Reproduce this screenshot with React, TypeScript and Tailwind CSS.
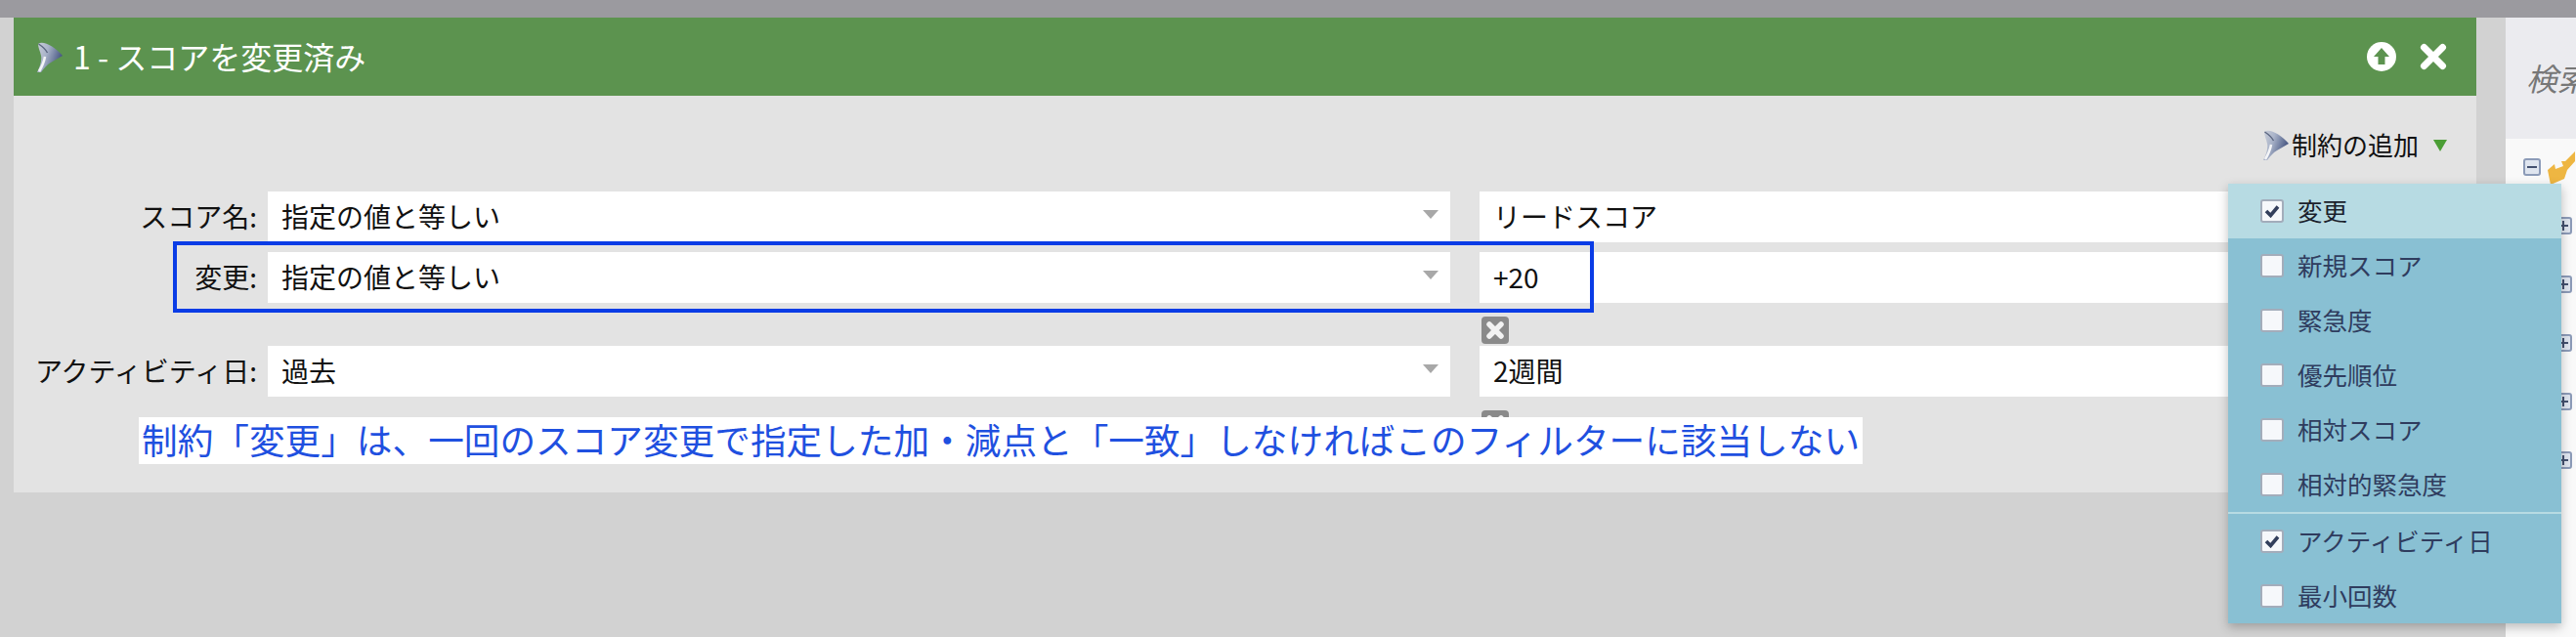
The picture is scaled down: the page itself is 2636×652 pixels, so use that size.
const JP = "font-['Noto_Sans_CJK_JP','Noto_Sans',sans-serif]";

const MENU_TOP = [
  { label: "変更", checked: true, active: true },
  { label: "新規スコア", checked: false },
  { label: "緊急度", checked: false },
  { label: "優先順位", checked: false },
  { label: "相対スコア", checked: false },
  { label: "相対的緊急度", checked: false },
];

const MENU_BOTTOM = [
  { label: "アクティビティ日", checked: true },
  { label: "最小回数", checked: false },
];

function Funnel({ id }: { id: string }) {
  return (
    <svg width="29" height="33" viewBox="0 0 29 33" className="shrink-0">
      <defs>
        <linearGradient id={id} x1="0" y1="0.1" x2="1" y2="0.5">
          <stop offset="0" stopColor="#c9ced8" />
          <stop offset="0.4" stopColor="#a9b3c9" />
          <stop offset="1" stopColor="#3f4f7c" />
        </linearGradient>
      </defs>
      <path
        d="M3 3C8-1 20 6 28 15L16 22C12 24 10 27 6 32L2 32C5 26 7 20 6 15C5 10 3 7 3 3Z"
        fill={`url(#${id})`}
      />
      <path d="M3.500 3c3 2 7 5 9 9" fill="none" stroke="#5b6680" strokeWidth="1.500" />
      <path d="M10 16c-1 6-3 10-6 15" fill="none" stroke="#f4f5f7" strokeWidth="2.500" />
    </svg>
  );
}

function RemoveIcon() {
  return (
    <div className="flex size-[28px] items-center justify-center rounded-[4px] bg-[#8a8a8a]">
      <svg width="20" height="20" viewBox="0 0 20 20">
        <path d="M4 4l12 12M16 4L4 16" stroke="#f2f2f2" strokeWidth="5.500" strokeLinecap="round" />
      </svg>
    </div>
  );
}

function FieldRow({ label, op, value }: { label: string; op: string; value: string }) {
  return (
    <div className="flex h-[52px] items-stretch text-[28px] leading-none text-[#111]">
      <div className="flex w-[249px] items-center justify-end pb-[2px]">{label}:</div>
      <div className="ml-[11px] flex w-[1210px] items-center justify-between bg-white pb-[2px] pl-[14px] pr-[12px]">
        <span>{op}</span>
        <span className="mb-[4px] size-0 border-x-[8px] border-t-[9px] border-x-transparent border-t-[#a8a8a8]" />
      </div>
      <div className="ml-[30px] flex w-[1000px] items-center bg-white pb-[2px] pl-[14px]">{value}</div>
    </div>
  );
}

function MenuItem({ label, checked, active }: { label: string; checked: boolean; active?: boolean }) {
  return (
    <div
      className={`flex h-[56px] items-center gap-[14px] pl-[33px] text-[25.500px] leading-none ${
        active ? "bg-[#b7dbe3] text-[#1b1f2c]" : "text-[#2f3c5e]"
      }`}
    >
      <span className="flex size-[24px] items-center justify-center rounded-[3px] border-2 border-[#a3adbb] bg-[#f6f8fb]">
        {checked && (
          <svg width="16" height="14" viewBox="0 0 16 14">
            <path d="M2 7l4.500 4.500L14 2.500" fill="none" stroke="#333f5c" strokeWidth="3.600" />
          </svg>
        )}
      </span>
      <span className="-mt-[3px]">{label}</span>
    </div>
  );
}

export default function App() {
  return (
    <div className={`${JP} relative flex h-[652px] w-[2636px] flex-col overflow-hidden bg-[#d2d2d2]`}>
      <div className="h-[18px] shrink-0 bg-[#9b9a9f]" />

      <div className="flex flex-1">
        {/* filter card */}
        <div className="ml-[14px] w-[2520px] shrink-0 self-start">
          <div className="flex h-[80px] items-center justify-between bg-[#5c934f] pl-[22px] pr-[30px] text-white">
            <div className="flex items-center gap-[10px] text-[32px] leading-none">
              <Funnel id="funnel-head" />
              <span className="pb-[2px]">1 - スコアを変更済み</span>
            </div>
            <div className="flex items-center gap-[24px]">
              <svg width="30" height="30" viewBox="0 0 30 30">
                <circle cx="15" cy="15" r="15" fill="#fff" />
                <path d="M15 6l8 9h-4.500v8h-7v-8H7Z" fill="#5c934f" />
              </svg>
              <svg width="28" height="28" viewBox="0 0 28 28">
                <path d="M4.500 4.500l19 19M23.500 4.500l-19 19" stroke="#fff" strokeWidth="7" strokeLinecap="round" />
              </svg>
            </div>
          </div>

          <div className="relative h-[406px] bg-[#e3e3e3]">
            <div className="flex h-[98px] items-start justify-end pr-[30px] pt-[34px]">
              <div className="flex items-center text-[26px] leading-none text-[#111]">
                <Funnel id="funnel-add" />
                <span className="ml-[2px] pb-[2px]">制約の追加</span>
                <span className="ml-[15px] size-0 border-x-[7px] border-t-[12px] border-x-transparent border-t-[#4b9e35]" />
              </div>
            </div>

            <FieldRow label="スコア名" op="指定の値と等しい" value="リードスコア" />
            <div className="mt-[10px]">
              <FieldRow label="変更" op="指定の値と等しい" value="+20" />
            </div>
            <div className="flex h-[44px] items-start pl-[1502px] pt-[14px]">
              <RemoveIcon />
            </div>
            <FieldRow label="アクティビティ日" op="過去" value="2週間" />
            <div className="pl-[1502px] pt-[14px]">
              <RemoveIcon />
            </div>

            {/* annotations on top of the screenshot */}
            <div className="absolute left-[163px] top-[149px] h-[73px] w-[1454px] border-4 border-[#0a3ce6]" />
            <div className="absolute left-[128px] top-[329px] flex h-[48px] w-[1764px] items-center whitespace-nowrap bg-white pb-[4px] pl-[3px] text-[36.650px] leading-none text-[#1f50e0]">
              制約「変更」は、一回のスコア変更で指定した加・減点と「一致」しなければこのフィルターに該当しない
            </div>
          </div>
        </div>

        {/* tree panel */}
        <div className="ml-[30px] flex-1 bg-[#f9f9f9]">
          <div className="flex h-[124px] items-center overflow-hidden bg-[#ebebef] pb-[2px] pl-[21px] text-[32px] italic leading-none whitespace-nowrap text-[#777]">
            検索
          </div>
          <div className="flex items-start gap-[7px] pl-[18px] pt-[20px]">
            <span className="flex h-[18px] w-[18px] shrink-0 items-center justify-center rounded-[3px] border-2 border-[#8c9bb8] bg-[#dfe5ef]">
              <span className="h-[2px] w-[10px] bg-[#44516f]" />
            </span>
            <svg width="28" height="34" viewBox="0 0 28 34" className="-mt-[7px] shrink-0">
              <path d="M28 0L18 10l-4 0 2 5-8 3-1-5-7 6 3 15 14-6 3-9 8-9Z" fill="#eeb642" />
            </svg>
          </div>
          <div className="flex flex-col gap-[42px] pl-[50px] pt-[33px]">
            {[0, 1, 2, 3, 4].map((i) => (
              <span
                key={i}
                className="relative flex h-[18px] w-[18px] items-center justify-center rounded-[3px] border-2 border-[#8c9bb8] bg-[#dfe5ef]"
              >
                <span className="h-[2px] w-[10px] bg-[#44516f]" />
                <span className="absolute h-[10px] w-[2px] bg-[#44516f]" />
              </span>
            ))}
          </div>
        </div>
      </div>

      {/* constraint dropdown */}
      <div className="absolute left-[2280px] top-[188px] w-[341px] bg-[#89c0d3] shadow-[0_4px_10px_rgba(0,0,0,0.25)]">
        {MENU_TOP.map((item) => (
          <MenuItem key={item.label} {...item} />
        ))}
        <div className="h-[2px] bg-[#b7dbe3]" />
        {MENU_BOTTOM.map((item) => (
          <MenuItem key={item.label} {...item} />
        ))}
      </div>
    </div>
  );
}
